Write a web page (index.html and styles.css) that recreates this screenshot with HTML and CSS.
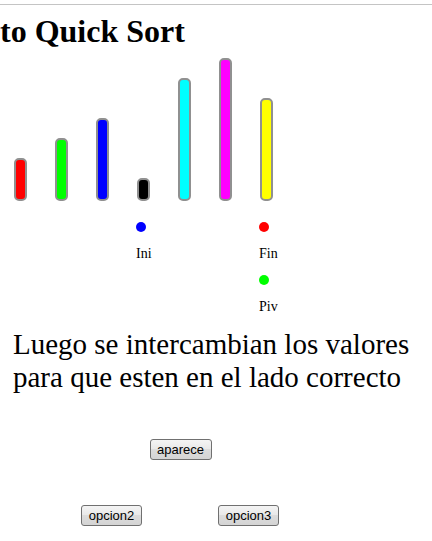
FILE: index.html
```html
<!DOCTYPE html>
<html>

<head>
    <meta charset="utf-8">
    <title>Quick Sort</title>
    <link rel="stylesheet" href="styles.css">
</head>

<body>
    <div class="rule"></div>
    <h1>to Quick Sort</h1>

    <div class="bars">
        <div class="bar red" style="height: 43px"></div>
        <div class="bar green" style="height: 63px"></div>
        <div class="bar blue" style="height: 83px"></div>
        <div class="bar black" style="height: 23px"></div>
        <div class="bar cyan" style="height: 123px"></div>
        <div class="bar magenta" style="height: 143px"></div>
        <div class="bar yellow" style="height: 103px"></div>
    </div>

    <div class="markers">
        <div class="slot"></div>
        <div class="slot"></div>
        <div class="slot"></div>
        <div class="slot">
            <span class="dot blue"></span>
            <span class="label">Ini</span>
        </div>
        <div class="slot"></div>
        <div class="slot"></div>
        <div class="slot">
            <span class="dot red"></span>
            <span class="label">Fin</span>
            <span class="dot green"></span>
            <span class="label">Piv</span>
        </div>
    </div>

    <p class="step">Luego se intercambian los valores para que esten en el lado correcto</p>

    <div class="options">
        <button class="col2">aparece</button>
        <button class="col1">opcion2</button>
        <button class="col3">opcion3</button>
    </div>
</body>

</html>
```

FILE: styles.css
```css
html,
body {
    margin: 0;
    padding: 0;
    background: #fff;
    color: #000;
    font-family: "Liberation Serif", "Times New Roman", serif;
}

.rule {
    margin-top: 4px;
    border-top: 1px solid #c4c4c4;
}

h1 {
    margin: 8px 0 0;
    font-size: 32px;
    line-height: 36px;
    font-weight: bold;
    white-space: nowrap;
}

.bars {
    display: flex;
    align-items: flex-end;
    gap: 28px;
    height: 152px;
    padding-left: 14px;
}

.bar {
    box-sizing: border-box;
    width: 13px;
    border: 2px solid #909090;
    border-radius: 5px;
}

.red { background: #ff0000; }
.green { background: #00ff00; }
.blue { background: #0000ff; }
.black { background: #000000; }
.cyan { background: #00ffff; }
.magenta { background: #ff00ff; }
.yellow { background: #ffff00; }

.markers {
    display: flex;
    gap: 28px;
    margin-top: 21px;
    padding-left: 13px;

    & .slot {
        width: 13px;
        display: flex;
        flex-direction: column;
        align-items: flex-start;
    }
}

.dot {
    width: 10px;
    height: 10px;
    border-radius: 50%;
    margin-bottom: 13px;
}

.label {
    font-size: 14px;
    line-height: 17px;
    white-space: nowrap;
    margin-bottom: 13px;
}

.step {
    margin: 0;
    padding-left: 13px;
    font-size: 29px;
    line-height: 33px;
}

.options {
    display: grid;
    grid-template-columns: repeat(3, 68.5px);
    grid-auto-rows: 21px;
    row-gap: 45px;
    margin-top: 45px;
    padding-left: 81px;
    justify-items: start;

    & button {
        box-sizing: border-box;
        height: 21px;
        width: 61px;
        padding: 0;
        border: 1px solid #707070;
        border-radius: 3px;
        background: linear-gradient(#f4f4f4, #e8e8e8 50%, #dcdcdc 50%, #d4d4d4);
        font-family: "Liberation Sans", Tahoma, sans-serif;
        font-size: 13px;
        color: #000;
    }

    & .col1 { grid-column: 1; grid-row: 2; }
    & .col2 { grid-column: 2; grid-row: 1; width: 62px; }
    & .col3 { grid-column: 3; grid-row: 2; }
}
```
